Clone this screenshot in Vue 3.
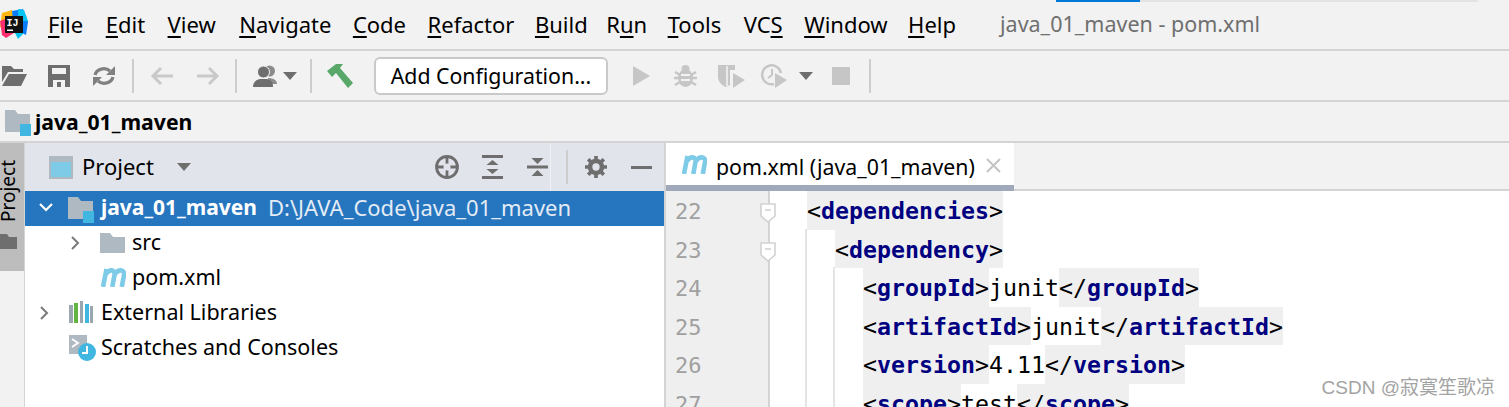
<script setup>
const menu = [
  ['F', 'ile', 0, 0], ['E', 'dit', 0, 1], ['V', 'iew', 0, 1], ['N', 'avigate', 0, 2], ['C', 'ode', 0, 0], ['R', 'efactor', 0, 0],
  ['B', 'uild', 0, -1], ['R', 'un', 1, -3], ['T', 'ools', 0, -1], ['VC', 'S', 2, 1], ['W', 'indow', 0, 0], ['H', 'elp', 0, -1]
]
const code = [
  { n: 22, indent: 0, parts: [['t', 'dependencies']] },
  { n: 23, indent: 1, parts: [['t', 'dependency']] },
  { n: 24, indent: 2, parts: [['t', 'groupId'], ['v', 'junit'], ['c', 'groupId']] },
  { n: 25, indent: 2, parts: [['t', 'artifactId'], ['v', 'junit'], ['c', 'artifactId']] },
  { n: 26, indent: 2, parts: [['t', 'version'], ['v', '4.11'], ['c', 'version']] },
  { n: 27, indent: 2, parts: [['t', 'scope'], ['v', 'test'], ['c', 'scope']] }
]
</script>

<template>
  <div class="ide">
    <header class="menubar">
      <svg class="logo" width="28" height="30" viewBox="0 0 28 30">
        <path d="M2 4L12 1L14 12L6 22L0 18Z" fill="#fdb60d" />
        <path d="M12 2L23 0L28 13L26 26L14 20Z" fill="#087cfa" />
        <path d="M18 0L24 1L28 12L18 12Z" fill="#07c3f2" />
        <path d="M0 12L8 9L14 24L6 29L2 26Z" fill="#fe2e6f" />
        <path d="M14 22L24 24L18 30Z" fill="#07c3f2" />
        <rect x="5" y="7" width="18" height="17" fill="#111" />
        <text x="6.500" y="16.500" class="logo-text">IJ</text>
        <rect x="7" y="20.500" width="6" height="1.500" fill="#fff" />
      </svg>
      <nav class="menu">
        <span v-for="m in menu" :key="m[0] + m[1]" class="menu-item" :style="{ marginLeft: m[3] + 'px' }">
          <template v-if="m[2] === 1">{{ m[0] }}<u>{{ m[1][0] }}</u>{{ m[1].slice(1) }}</template>
          <template v-else-if="m[2] === 2">{{ m[0] }}<u>{{ m[1] }}</u></template>
          <template v-else><u>{{ m[0] }}</u>{{ m[1] }}</template>
        </span>
      </nav>
      <span class="title">java_01_maven - pom.xml</span>
      <i class="strip-blue"></i>
      <i class="strip-gray"></i>
    </header>

    <section class="toolbar">
      <svg class="first" width="25" height="21" viewBox="0 0 25 21"><path d="M0 1h9l3 3h9v3H6L0 17z" fill="#6e6e6e"/><path d="M7 9h18l-6 12H0z" fill="#6e6e6e"/></svg>
      <svg class="t-save" width="22" height="22" viewBox="0 0 22 22"><path fill-rule="evenodd" d="M0 0h22v22H0zM4 3v6h14V3zM5 15v7h12v-7z" fill="#6e6e6e"/><rect x="9" y="17" width="4" height="5" fill="#6e6e6e"/></svg>
      <svg class="t-refresh" width="22" height="22" viewBox="0 0 22 22"><path d="M2 10a9 8 0 0 1 15-4M20 12a9 8 0 0 1-15 4" fill="none" stroke="#808080" stroke-width="3.200"/><path d="M22 1v9h-9zM0 21v-9h9z" fill="#808080"/></svg>
      <i class="sep s1"></i>
      <svg class="t-back" width="23" height="20" viewBox="0 0 23 20"><path d="M23 10H4M11 2l-8 8 8 8" fill="none" stroke="#c9c9c9" stroke-width="3"/></svg>
      <svg class="t-fwd" width="23" height="20" viewBox="0 0 23 20"><path d="M0 10h19M12 2l8 8-8 8" fill="none" stroke="#c9c9c9" stroke-width="3"/></svg>
      <i class="sep s2"></i>
      <svg class="t-user" width="24" height="22" viewBox="0 0 24 22"><circle cx="16.500" cy="6" r="5.500" fill="#8c8c8c"/><path d="M15 13c5 0 9 2 9 6H15z" fill="#8c8c8c"/><circle cx="10.500" cy="7" r="6" fill="#6e6e6e" stroke="#f2f2f2" stroke-width="1"/><path d="M0 22c0-5 3-7 7-8h7c4 1 6 3 6 8z" fill="#6e6e6e"/></svg>
      <i class="tri t-tri1"></i>
      <i class="sep s3"></i>
      <svg class="t-hammer" width="26" height="24" viewBox="0 0 26 24"><path d="M0 7L9 0h7l-3 4 13 15-5 5L9 9l-4 4z" fill="#59a869"/></svg>
      <button class="config">Add Configuration...</button>
      <svg class="t-play" width="17" height="20" viewBox="0 0 17 20"><path d="M0 0l17 10L0 20z" fill="#c6c6c6"/></svg>
      <svg class="t-bug" width="23" height="24" viewBox="0 0 23 24"><ellipse cx="11.500" cy="14" rx="7.500" ry="9" fill="#c6c6c6"/><circle cx="11.500" cy="5" r="4" fill="#c6c6c6"/><path d="M1 8l5 3M22 8l-5 3M0 14h5M23 14h-5M1 21l5-3M22 21l-5-3" stroke="#c6c6c6" stroke-width="2.400"/><path d="M7 11h9M7 16h9" stroke="#f2f2f2" stroke-width="2"/></svg>
      <svg class="t-cov" width="27" height="24" viewBox="0 0 27 24"><path d="M0 1h17v5h-5v15l-4 2c-5-2-8-6-8-10z" fill="#c6c6c6"/><path d="M9 2v20" stroke="#f2f2f2" stroke-width="1.600"/><path d="M15 9l12 7-12 8z" fill="#c6c6c6"/></svg>
      <svg class="t-prof" width="26" height="24" viewBox="0 0 26 24"><path d="M13 20A9.500 9.500 0 1 1 20 9" fill="none" stroke="#c6c6c6" stroke-width="2.400"/><path d="M11 5v6l-4 3" fill="none" stroke="#c6c6c6" stroke-width="2"/><path d="M14 9l12 7-12 8z" fill="#c6c6c6"/></svg>
      <i class="tri t-tri2"></i>
      <svg class="t-stop" width="18" height="18" viewBox="0 0 18 18"><rect width="18" height="18" fill="#c6c6c6"/></svg>
      <i class="sep s4"></i>
    </section>

    <section class="navbar">
      <svg width="26" height="26" viewBox="0 0 26 26" class="folder-mod"><path d="M0 0h10l3 4h12v18H0z" fill="#afb9c1"/><rect x="15" y="14" width="11" height="12" fill="#40b6e0"/></svg>
      <strong>java_01_maven</strong>
    </section>

    <main class="body">
      <aside class="stripe">
        <div class="stripe-btn">
          <span class="stripe-text">Project</span>
          <svg width="17" height="15" viewBox="0 0 17 15" class="stripe-folder"><path d="M0 0h7l2 3h8v12H0z" fill="#6e6e6e"/></svg>
        </div>
      </aside>

      <section class="project">
        <div class="panel-head">
          <svg width="24" height="23" viewBox="0 0 24 23"><rect width="24" height="23" fill="#afb9c1"/><rect x="2" y="6" width="20" height="15" fill="#7ecbe8"/></svg>
          <span class="panel-title">Project</span>
          <i class="tri panel-tri"></i>
          <span class="panel-tools">
            <svg width="24" height="24" viewBox="0 0 24 24"><circle cx="12" cy="12" r="10.500" fill="none" stroke="#6e6e6e" stroke-width="2.800"/><path d="M12 2v20M2 12h20" stroke="#6e6e6e" stroke-width="2.800"/><circle cx="12" cy="12" r="3.500" fill="#e1e4eb"/></svg>
            <svg width="21" height="24" viewBox="0 0 21 24" class="mid"><path d="M0 1.500h21M0 22.500h21" stroke="#6e6e6e" stroke-width="3"/><path d="M10.500 5l6 5h-12zM10.500 19l6-5h-12z" fill="#6e6e6e"/></svg>
            <svg width="21" height="24" viewBox="0 0 21 24" class="mid2"><path d="M0 12h21" stroke="#6e6e6e" stroke-width="3"/><path d="M10.500 9l-6-6h12zM10.500 15l6 6h-12z" fill="#6e6e6e"/></svg>
            <i class="sep tall"></i>
            <svg width="22" height="22" viewBox="0 0 24 24" class="gear"><circle cx="12" cy="12" r="6.500" fill="none" stroke="#6e6e6e" stroke-width="5"/><path d="M12 0v5M12 19v5M0 12h5M19 12h5M3.500 3.500l4 4M16.500 16.500l4 4M3.500 20.500l4-4M16.500 7.500l4-4" stroke="#6e6e6e" stroke-width="4"/></svg>
            <i class="minus"></i>
          </span>
          <i class="head-line"></i>
        </div>

        <div class="row selected">
          <svg class="chev" width="16" height="10" viewBox="0 0 16 10"><path d="M2 1l6 6 6-6" fill="none" stroke="#fff" stroke-width="2.200"/></svg>
          <svg class="node-icon" width="26" height="26" viewBox="0 0 26 26"><path d="M0 0h10l3 4h12v18H0z" fill="#afb9c1"/><rect x="15" y="14" width="11" height="12" fill="#40b6e0"/></svg>
          <b class="row-b">java_01_maven</b>
          <span class="path">D:\JAVA_Code\java_01_maven</span>
        </div>
        <div class="row lvl1">
          <svg class="chev-r" width="10" height="16" viewBox="0 0 10 16"><path d="M1 2l6 6-6 6" fill="none" stroke="#7a7a7a" stroke-width="2"/></svg>
          <svg class="node-small" width="25" height="20" viewBox="0 0 25 20"><path d="M0 0h10l3 4h12v16H0z" fill="#afb9c1"/></svg>
          <span>src</span>
        </div>
        <div class="row lvl1">
          <svg class="node-m" width="26" height="19" viewBox="0 0 26 19"><path d="M3 19L6.500 1M6 6C9 1 15.500 1 14.500 7L12.300 19M15 6C18 1 25 1 24 7L21.800 19" fill="none" stroke="#7ecbe8" stroke-width="4.600"/></svg>
          <span>pom.xml</span>
        </div>
        <div class="row">
          <svg class="chev-r top" width="10" height="16" viewBox="0 0 10 16"><path d="M1 2l6 6-6 6" fill="none" stroke="#7a7a7a" stroke-width="2"/></svg>
          <svg class="node-lib" width="25" height="22" viewBox="0 0 25 22"><rect y="4" width="4" height="18" fill="#9aa7b0"/><rect x="5" y="2" width="4" height="20" fill="#62b543"/><rect x="11" y="0" width="3" height="22" fill="#9aa7b0"/><rect x="16" y="3" width="4" height="19" fill="#40b6e0"/><rect x="21" y="5" width="3" height="17" fill="#9aa7b0"/></svg>
          <span>External Libraries</span>
        </div>
        <div class="row">
          <svg class="node-scr" width="27" height="26" viewBox="0 0 27 26"><path d="M0 0h18v9a9 9 0 0 0-8 10H0z" fill="#afb9c1"/><path d="M3 4l6 4-6 4" fill="none" stroke="#fff" stroke-width="1.800"/><circle cx="18" cy="17" r="9" fill="#40b6e0"/><path d="M18 11v7h-5" fill="none" stroke="#fff" stroke-width="2"/></svg>
          <span>Scratches and Consoles</span>
        </div>
      </section>

      <section class="editor">
        <div class="tabs">
          <div class="tab">
            <svg class="tab-m" width="26" height="19" viewBox="0 0 26 19"><path d="M3 19L6.500 1M6 6C9 1 15.500 1 14.500 7L12.300 19M15 6C18 1 25 1 24 7L21.800 19" fill="none" stroke="#7ecbe8" stroke-width="4.600"/></svg>
            <span class="tab-text">pom.xml (java_01_maven)</span>
            <svg class="close" width="15" height="15" viewBox="0 0 15 15"><path d="M1 1l13 13M14 1L1 14" stroke="#c4c4c4" stroke-width="2"/></svg>
          </div>
        </div>
        <div class="code">
          <div class="gutter">
            <div v-for="l in code" :key="l.n" class="num">{{ l.n }}</div>
            <svg class="fold f1" width="16" height="20" viewBox="0 0 16 20"><path d="M1 1h14v12l-7 6-7-6z" fill="#fff" stroke="#d2d2d2" stroke-width="1.600"/><path d="M5 7h6" stroke="#d2d2d2" stroke-width="1.600"/></svg>
            <svg class="fold f2" width="16" height="20" viewBox="0 0 16 20"><path d="M1 1h14v12l-7 6-7-6z" fill="#fff" stroke="#d2d2d2" stroke-width="1.600"/><path d="M5 7h6" stroke="#d2d2d2" stroke-width="1.600"/></svg>
          </div>
          <div class="lines">
            <div v-for="l in code" :key="l.n" class="line" :class="'ind' + l.indent">
              <template v-for="(p, i) in l.parts" :key="i">
                <span v-if="p[0] === 't'" class="tag">&lt;<b>{{ p[1] }}</b>&gt;</span>
                <span v-else-if="p[0] === 'c'" class="tag">&lt;/<b>{{ p[1] }}</b>&gt;</span>
                <span v-else>{{ p[1] }}</span>
              </template>
            </div>
            <i class="guide g1"></i>
            <i class="guide g2"></i>
          </div>
        </div>
        <span class="watermark">CSDN @寂寞笙歌凉</span>
      </section>
    </main>
  </div>
</template>

<style>
html, body { margin: 0; background: #fff; overflow: hidden; }
</style>

<style scoped>
.ide {
  width: 1509px;
  height: 407px;
  overflow: hidden;
  background: #f2f2f2;
  font-family: "Noto Sans", "Open Sans", sans-serif;
  color: #000;
  display: flex;
  flex-direction: column;
}
svg { display: block; flex: none; }
.menubar {
  height: 49px;
  flex: none;
  position: relative;
  display: flex;
  align-items: center;
  border-bottom: 2px solid #d4d4d4;
  font-size: 22px;
}
.logo { margin-top: -1px; }
.logo-text { font: 700 10px "Liberation Mono", monospace; fill: #fff; }
.menu { display: flex; margin-left: 20px; gap: 21.500px; margin-top: -2px; }
.menu u { text-underline-offset: 3px; text-decoration-thickness: 2px; }
.title { margin-left: 44px; color: #6f6f6f; font-size: 21.500px; margin-top: -2px; }
.strip-blue { position: absolute; left: 1056px; top: 0; width: 84px; height: 2px; background: #0078d7; }
.strip-gray { position: absolute; left: 1140px; top: 0; width: 338px; height: 2px; background: #e3e3e3; }
.toolbar {
  height: 49px;
  flex: none;
  display: flex;
  align-items: center;
  border-bottom: 2px solid #d4d4d4;
}
.sep { width: 2px; height: 34px; background: #cdcdcd; display: block; flex: none; }
.tri { width: 0; height: 0; border: 7px solid transparent; border-top: 8px solid #6e6e6e; border-bottom: 0; display: block; flex: none; }
.first { margin-left: 2px; }
.t-save { margin-left: 21px; }
.t-refresh { margin-left: 23px; }
.s1 { margin-left: 17px; }
.t-back { margin-left: 16px; }
.t-fwd { margin-left: 24px; }
.s2 { margin-left: 15px; }
.t-user { margin-left: 16px; }
.t-tri1 { margin-left: 6px; }
.s3 { margin-left: 13px; }
.t-hammer { margin-left: 15px; }
.t-play { margin-left: 25px; }
.t-bug { margin-left: 24px; }
.t-cov { margin-left: 21px; }
.t-prof { margin-left: 16px; }
.t-tri2 { margin-left: 12px; }
.t-stop { margin-left: 19px; }
.s4 { margin-left: 19px; }
.config {
  margin-left: 21px;
  width: 234px;
  height: 38px;
  box-sizing: border-box;
  background: #fff;
  border: 2px solid #c9c9c9;
  border-radius: 6px;
  font: 21.300px "Noto Sans", sans-serif;
  color: #000;
  padding: 0;
}
.navbar {
  height: 39px;
  flex: none;
  display: flex;
  align-items: center;
  font-size: 21.200px;
  border-bottom: 2px solid #d4d4d4;
}
.folder-mod { margin-left: 5px; margin-right: 4px; margin-top: 3px; }
.body { flex: 1; display: flex; min-height: 0; background: #fff; }
.stripe {
  width: 24px;
  flex: none;
  background: #f2f2f2;
  border-right: 1px solid #d4d4d4;
}
.stripe-btn {
  width: 24px;
  height: 128px;
  background: #bdbdbd;
  display: flex;
  flex-direction: column;
  align-items: flex-start;
}
.stripe-text {
  writing-mode: vertical-rl;
  transform: rotate(180deg);
  font-size: 19px;
  margin-top: 17px;
  margin-left: -1px;
  line-height: 18px;
}
.stripe-folder { margin-top: 12px; }
.project { width: 641px; flex: none; box-sizing: border-box; border-right: 2px solid #d4d4d4; font-size: 21.500px; }
.panel-head {
  height: 48px;
  background: #e1e4eb;
  display: flex;
  align-items: center;
  padding-left: 24px;
  box-sizing: border-box;
  position: relative;
}
.panel-title { margin-left: 9px; font-size: 22px; margin-top: -2px; }
.panel-tri { margin-left: 23px; }
.panel-tools { margin-left: auto; margin-right: 12px; display: flex; align-items: center; }
.mid { margin-left: 23px; }
.mid2 { margin-left: 24px; }
.tall { margin-left: 18px; }
.gear { margin-left: 17px; }
.minus { display: block; width: 21px; height: 3px; background: #6e6e6e; margin-left: 24px; }
.head-line { position: absolute; left: 525px; top: 0; width: 1px; height: 48px; background: #f0f1f4; }
.row {
  height: 34.800px;
  display: flex;
  align-items: center;
  position: relative;
  padding-left: 76px;
  padding-bottom: 2px;
  white-space: nowrap;
  box-sizing: border-box;
}
.row > svg { position: absolute; }
.selected { background: #2675bf; color: #fff; height: 35px; padding-bottom: 4px; }
.chev { left: 13px; top: 12px; }
.node-icon { left: 43px; top: 6px; }
.row-b { font-weight: 700; font-size: 21px; }
.path { margin-left: 11px; color: #e3ebf5; font-size: 22px; }
.lvl1 { padding-left: 107px; padding-bottom: 4px; }
.chev-r { left: 46px; top: 9px; }
.chev-r.top { left: 15px; }
.node-small { left: 75px; top: 7px; }
.node-m { left: 75px; top: 7px; }
.node-lib { left: 44px; top: 5px; }
.node-scr { left: 44px; top: 5px; }
.editor { flex: 1; position: relative; min-width: 0; }
.tabs { height: 48px; background: #f2f2f2; border-bottom: 2px solid #d4d4d4; box-sizing: border-box; display: flex; }
.tab {
  width: 348px;
  height: 48px;
  box-sizing: border-box;
  background: #fff;
  border-bottom: 6px solid #9fa9ba;
  display: flex;
  align-items: center;
  padding-left: 15px;
  font-size: 21.300px;
  white-space: nowrap;
  flex: none;
}
.tab-m { margin-right: 9px; }
.tab-text { margin-top: 4px; }
.close { margin-left: 11px; margin-top: 2px; }
.code { display: flex; position: relative; }
.gutter {
  flex: none;
  background: #efefef;
  border-right: 2px solid #d4d4d4;
  position: relative;
  box-sizing: border-box;
  width: 104px;
  height: 216px;
}
.num { height: 38.500px; padding-left: 9px; font: 22px/42px "DejaVu Sans Mono", monospace; color: #a0a0a0; }
.fold { position: absolute; left: 94px; }
.f1 { top: 12px; }
.f2 { top: 51px; }
.lines { position: relative; margin-left: 37px; font: 23.250px/40.500px "DejaVu Sans Mono", monospace; white-space: nowrap; }
.line { height: 38.500px; }
.ind1 { padding-left: 28px; }
.ind2 { padding-left: 56px; }
.tag { background: #efefef; display: inline-block; height: 38.500px; vertical-align: top; color: #000; }
.tag b { color: #000080; font-weight: 700; }
.guide { position: absolute; width: 2px; background: #e4e4e4; bottom: 0; display: block; }
.g1 { left: -2px; top: 38px; }
.g2 { left: 26px; top: 76px; }
.watermark {
  position: absolute;
  right: 14px;
  bottom: 8px;
  font: 19px "Liberation Sans", "Noto Sans CJK SC", sans-serif;
  color: #a3a3a3;
}
</style>
